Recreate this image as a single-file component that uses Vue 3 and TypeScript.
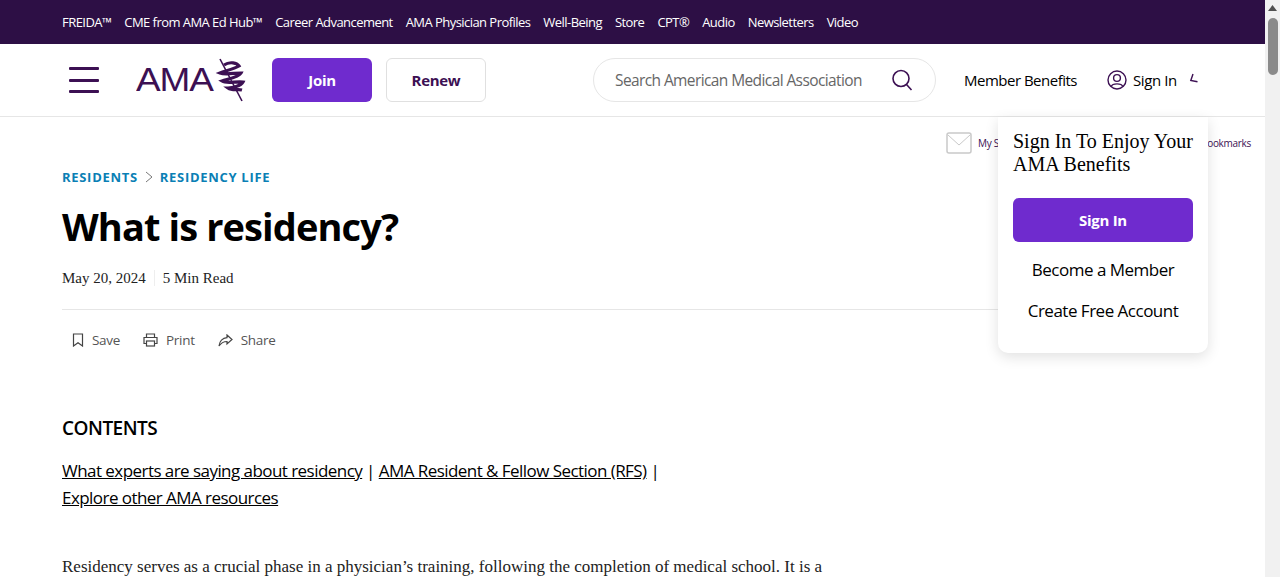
<script setup lang="ts">
const topLinks: string[] = [
  "FREIDA™",
  "CME from AMA Ed Hub™",
  "Career Advancement",
  "AMA Physician Profiles",
  "Well-Being",
  "Store",
  "CPT®",
  "Audio",
  "Newsletters",
  "Video",
];
</script>

<template>
  <div class="page">
    <nav class="topbar">
      <a v-for="link in topLinks" :key="link" class="top-link">{{ link }}</a>
    </nav>

    <header class="mainbar">
      <button class="burger" aria-label="Menu"><span /><span /><span /></button>
      <div class="logo">
        <span class="logo-text">AMA</span>
        <svg class="logo-mark" width="34" height="44" viewBox="0 0 34 44" fill="none" stroke="#3c1053">
          <path d="M8 1 L30 43" stroke-width="1.6" />
          <path d="M12 7 C18 3 25 5 27 8 C22 11 13 13 8 15 C13 17 22 15 29 15 C27 19 16 21 10 23 C15 26 24 23 31 24 C29 28 20 30 16 30 C20 33 26 31 30 32" stroke-width="3.2" />
        </svg>
      </div>
      <a class="btn btn-join">Join</a>
      <a class="btn btn-renew">Renew</a>
      <div class="search">
        <span class="search-text">Search American Medical Association</span>
        <svg width="24" height="24" viewBox="0 0 24 24" fill="none" stroke="#3c1053" stroke-width="1.6">
          <circle cx="11" cy="10.5" r="8" />
          <path d="M16.5 16.5 L21.5 22" />
        </svg>
      </div>
      <a class="benefits">Member Benefits</a>
      <a class="signin">
        <svg width="20" height="20" viewBox="0 0 20 20" fill="none" stroke="#3c1053" stroke-width="1.4">
          <circle cx="10" cy="10" r="9" />
          <circle cx="10" cy="8" r="3.4" />
          <path d="M4.2 16.5 C5.5 13 14.5 13 15.8 16.5" />
        </svg>
        <span>Sign In</span>
      </a>
      <svg class="caret" width="10" height="12" viewBox="0 0 10 12" fill="none" stroke="#3c1053" stroke-width="1.4">
        <path d="M4 1 L1.8 7.5 L8.5 8.8" />
      </svg>
    </header>

    <div class="tools">
      <svg width="26" height="22" viewBox="0 0 26 22" fill="none">
        <rect x="1" y="1" width="24" height="20" rx="2" fill="#fff" stroke="#c9c9c9" stroke-width="1.5" />
        <path d="M2 3 L13 13 L24 3" stroke="#c9c9c9" />
      </svg>
      <span class="tools-save">My Saved Articles</span>
      <span class="tools-marks">Bookmarks</span>
    </div>

    <main class="article">
      <div class="crumbs">
        <a>RESIDENTS</a>
        <svg width="8" height="12" viewBox="0 0 8 12" fill="none" stroke="#777" stroke-width="1">
          <path d="M1 1 L7 6 L1 11" />
        </svg>
        <a>RESIDENCY LIFE</a>
      </div>
      <h1 class="title">What is residency?</h1>
      <div class="meta">
        <span>May 20, 2024</span>
        <i class="meta-sep" />
        <span>5 Min Read</span>
      </div>
      <div class="actions">
        <a class="action">
          <svg width="12" height="14" viewBox="0 0 12 14" fill="none" stroke="#444" stroke-width="1.2">
            <path d="M1.5 1 H10.5 V13 L6 9.8 L1.5 13 Z" />
          </svg>
          Save
        </a>
        <a class="action">
          <svg width="15" height="14" viewBox="0 0 15 14" fill="none" stroke="#444" stroke-width="1.2">
            <path d="M3.5 4.5 V1 H11.5 V4.5 M3.5 10.5 H1 V4.5 H14 V10.5 H11.5" />
            <rect x="3.5" y="8" width="8" height="5" />
          </svg>
          Print
        </a>
        <a class="action">
          <svg width="15" height="13" viewBox="0 0 15 13" fill="none" stroke="#444" stroke-width="1.2">
            <path d="M9 1 L14 5.5 L9 10 V7.5 C5.5 7.5 3 9 1 12 C1.5 7.5 4.5 4 9 3.7 Z" />
          </svg>
          Share
        </a>
      </div>
      <h2 class="contents">CONTENTS</h2>
      <p class="toc">
        <a>What experts are saying about residency</a> | <a>AMA Resident &amp; Fellow Section (RFS)</a> |<br />
        <a>Explore other AMA resources</a>
      </p>
      <p class="body-text">Residency serves as a crucial phase in a physician’s training, following the completion of medical school. It is a</p>
    </main>

    <aside class="popover">
      <h3 class="pop-title">Sign In To Enjoy Your AMA Benefits</h3>
      <a class="pop-btn">Sign In</a>
      <a class="pop-link">Become a Member</a>
      <a class="pop-link">Create Free Account</a>
    </aside>

    <div class="scrollbar">
      <svg width="9" height="6" viewBox="0 0 9 6"><path d="M4.5 0 L9 6 H0 Z" fill="#505050" /></svg>
      <div class="thumb" />
    </div>
  </div>
</template>

<style>
html,
body {
  margin: 0;
  overflow: hidden;
  background: #fff;
}
</style>

<style scoped>
.page {
  position: relative;
  height: 577px;
  overflow: hidden;
  font-family: "Open Sans", "Noto Sans", sans-serif;
  color: #000;
}

.topbar {
  height: 44px;
  background: #2d0f45;
  display: flex;
  align-items: center;
  gap: 13px;
  padding-left: 62px;
}

.top-link {
  color: #fff;
  font-size: 13px;
  letter-spacing: -0.55px;
  white-space: nowrap;
}

.mainbar {
  height: 72px;
  border-bottom: 1px solid #e6e6e6;
  display: flex;
  align-items: center;
  padding-left: 69px;
}

.burger {
  width: 30px;
  height: 26px;
  padding: 0;
  border: 0;
  background: none;
  display: flex;
  flex-direction: column;
  justify-content: space-between;
  margin-right: 37px;
}

.burger span {
  display: block;
  height: 3px;
  border-radius: 1px;
  background: #3c1053;
}

.logo {
  display: flex;
  align-items: center;
  width: 136px;
}

.logo-text {
  font-family: "Liberation Sans", sans-serif;
  font-size: 33px;
  color: #3c1053;
  letter-spacing: -1px;
  transform: scaleX(1.12);
  transform-origin: left;
  width: 76px;
}

.logo-mark {
  margin-left: 0;
}

.btn {
  height: 44px;
  width: 100px;
  box-sizing: border-box;
  border-radius: 6px;
  display: flex;
  align-items: center;
  justify-content: center;
  font-size: 15px;
  font-weight: 700;
  letter-spacing: -0.3px;
}

.btn-join {
  background: #6f2bce;
  color: #fff;
}

.btn-renew {
  margin-left: 14px;
  border: 1px solid #e0e0e0;
  color: #3c1053;
}

.search {
  margin-left: 107px;
  width: 343px;
  height: 44px;
  box-sizing: border-box;
  border: 1px solid #e6e6e6;
  border-radius: 22px;
  display: flex;
  align-items: center;
  justify-content: space-between;
  padding: 0 21px 0 21px;
}

.search-text {
  font-size: 15.5px;
  color: #666;
  letter-spacing: -0.6px;
  white-space: nowrap;
}

.benefits {
  margin-left: 28px;
  font-size: 15px;
  letter-spacing: -0.5px;
  white-space: nowrap;
}

.signin {
  margin-left: 30px;
  display: flex;
  align-items: center;
  gap: 6px;
  font-size: 15px;
  letter-spacing: -0.4px;
  white-space: nowrap;
}

.caret {
  margin-left: 12px;
  margin-top: -3px;
}

.tools {
  position: absolute;
  top: 132px;
  left: 946px;
  width: 305px;
  display: flex;
  align-items: center;
  font-size: 10px;
  color: #3c1053;
  letter-spacing: -0.3px;
}

.tools-save {
  margin-left: 6px;
}

.tools-marks {
  margin-left: auto;
}

.article {
  padding: 52px 0 0 62px;
  width: 1140px;
  box-sizing: border-box;
}

.crumbs {
  display: flex;
  align-items: center;
  gap: 7px;
  height: 16px;
  font-size: 13px;
  font-weight: 700;
  letter-spacing: 0.7px;
  color: #0a7fb5;
}

.title {
  margin: 17px 0 0;
  font-size: 38px;
  line-height: 48px;
  font-weight: 700;
  letter-spacing: -0.9px;
}

.meta {
  margin-top: 18px;
  display: flex;
  align-items: center;
  font-family: "Liberation Serif", serif;
  font-size: 15px;
  line-height: 20px;
  color: #222;
  padding-bottom: 21px;
  border-bottom: 1px solid #e6e6e6;
}

.meta-sep {
  width: 1px;
  height: 16px;
  background: #eee;
  margin: 0 8px;
}

.actions {
  margin-top: 21px;
  display: flex;
  gap: 23px;
  padding-left: 10px;
}

.action {
  display: flex;
  align-items: center;
  gap: 8px;
  font-size: 13.5px;
  color: #555;
  letter-spacing: -0.3px;
}

.contents {
  margin: 66px 0 0;
  font-size: 19px;
  line-height: 26px;
  font-weight: 600;
  letter-spacing: -0.5px;
}

.toc {
  margin: 16px 0 0;
  font-size: 17px;
  line-height: 27px;
  letter-spacing: -0.55px;
}

.toc a {
  text-decoration: underline;
}

.body-text {
  margin: 43px 0 0;
  font-family: "Liberation Serif", serif;
  font-size: 17px;
  line-height: 26px;
  color: #222;
  white-space: nowrap;
}

.popover {
  position: absolute;
  top: 117px;
  left: 998px;
  width: 210px;
  height: 236px;
  box-sizing: border-box;
  padding: 13px 15px 0;
  background: #fff;
  border-radius: 0 0 10px 10px;
  box-shadow: 0 4px 14px rgba(0, 0, 0, 0.12);
  display: flex;
  flex-direction: column;
  align-items: center;
}

.pop-title {
  margin: 0;
  font-family: "Liberation Serif", serif;
  font-weight: 400;
  font-size: 20px;
  line-height: 23px;
  align-self: stretch;
}

.pop-btn {
  margin-top: 22px;
  width: 180px;
  height: 44px;
  border-radius: 6px;
  background: #6f2bce;
  color: #fff;
  font-size: 15px;
  font-weight: 700;
  letter-spacing: -0.3px;
  display: flex;
  align-items: center;
  justify-content: center;
}

.pop-link {
  margin-top: 17px;
  font-size: 17px;
  line-height: 24px;
  letter-spacing: -0.5px;
  white-space: nowrap;
}

.pop-btn + .pop-link {
  margin-top: 16px;
}

.scrollbar {
  position: absolute;
  top: 0;
  right: 0;
  width: 15px;
  height: 577px;
  background: #f1f1f1;
  display: flex;
  flex-direction: column;
  align-items: center;
  padding-top: 5px;
  box-sizing: border-box;
}

.thumb {
  margin-top: 7px;
  width: 10px;
  height: 57px;
  border-radius: 5px;
  background: #8b8b8b;
}
</style>
